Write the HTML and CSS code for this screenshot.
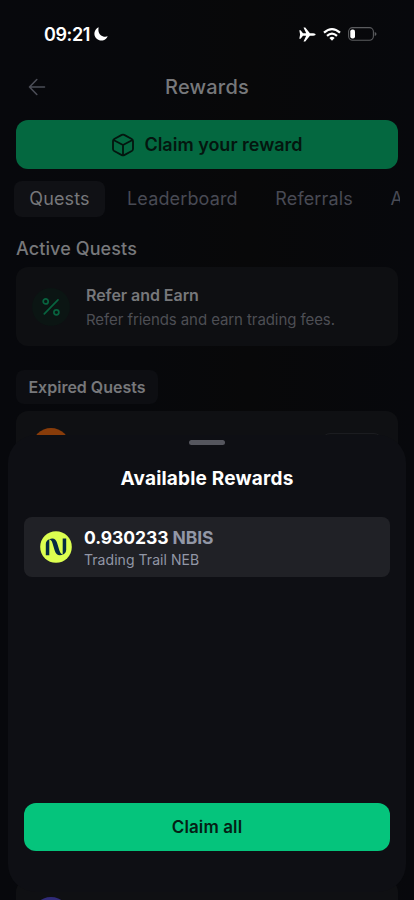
FILE: index.html
```html
<!DOCTYPE html>
<html lang="en">
<head>
<meta charset="utf-8">
<meta name="viewport" content="width=device-width, initial-scale=1">
<title>Rewards</title>
<link rel="stylesheet" href="styles.css">
</head>
<body>
<div class="screen">
  <header class="status">
    <div class="clock"><span>09:21</span>
      <svg width="14" height="14" viewBox="0 0 14 14"><path d="M4.7 0.3A6.9 6.9 0 1 0 13.7 9.3C9 11.2 2.9 7 4.7 0.3Z" fill="#fff"/></svg>
    </div>
    <div class="signals">
      <svg width="17" height="15" viewBox="0 0 17 15"><path d="M.3 3.3H1.6L4 6.2H7.2L4.5.4H6.3L10.9 6.2H14.3Q16.7 6.6 16.7 7.5T14.3 8.8H10.9L6.3 14.6H4.5L7.2 8.8H4L1.6 11.7H.3L1.1 7.5Z" fill="#fff"/></svg>
      <svg width="18" height="13" viewBox="0 0 18 13" fill="none" stroke="#fff" stroke-width="2.2"><path d="M1 4.7Q9-2.3 17 4.7M4 7.9Q9 3.5 14 7.9"/><path d="M6.4 10Q9 7.7 11.6 10L9 12.7Z" fill="#fff" stroke="none"/></svg>
      <svg width="29" height="14" viewBox="0 0 29 14"><rect x=".6" y=".6" width="24.8" height="12.6" rx="4" fill="none" stroke="#5b5c5f" stroke-width="1.1"/><rect x="2.3" y="2.4" width="4.7" height="9" rx="2" fill="#fff"/><path d="M26.7 5Q28.5 5.4 28.5 7T26.7 9Z" fill="#5b5c5f"/></svg>
    </div>
  </header>
  <nav class="topbar">
    <svg class="back" width="18" height="18" viewBox="0 0 18 18" fill="none" stroke="#4b4d57" stroke-width="1.6" stroke-linecap="round" stroke-linejoin="round"><path d="M16.5 9H1.5M8.8 1.5L1.5 9l7.3 7.5"/></svg>
    <h1>Rewards</h1>
  </nav>
  <button class="claim">
    <svg width="24" height="24" viewBox="0 0 24 24" fill="none" stroke="#04160f" stroke-width="1.8" stroke-linecap="round" stroke-linejoin="round"><path d="M10.8 1.9Q12 1.2 13.2 1.9L20.8 6Q22 6.7 22 8V16Q22 17.3 20.8 18L13.2 22.1Q12 22.8 10.8 22.1L3.2 18Q2 17.3 2 16V8Q2 6.7 3.2 6ZM2.5 7L12 12L21.5 7M12 12V22"/></svg>
    <span>Claim your reward</span>
  </button>
  <div class="tabs"><span class="tab selected">Quests</span><span class="tab leader">Leaderboard</span><span class="tab">Referrals</span><span class="tab">A</span></div>
  <h2>Active Quests</h2>
  <section class="quest">
    <div class="percent"><svg width="18" height="18" viewBox="0 0 18 18" fill="none" stroke="#08633f" stroke-width="1.7" stroke-linecap="round"><path d="M2.3 15.9L16 1.8"/><circle cx="3.7" cy="3.4" r="2.5"/><circle cx="14.4" cy="14.3" r="2.5"/></svg></div>
    <div class="quest-text"><div class="quest-name">Refer and Earn</div><div class="quest-info">Refer friends and earn trading fees.</div></div>
  </section>
  <div class="chip">Expired Quests</div>
  <section class="expired"><div class="orange"></div><div class="outline"></div></section>
  <section class="expired last"><div class="purple"></div></section>

  <div class="sheet">
    <div class="handle"></div>
    <h3>Available Rewards</h3>
    <section class="reward">
      <svg width="32" height="32" viewBox="0 0 32 32"><circle cx="16" cy="16" r="15.8" fill="#dcff50"/><g fill="#052b42"><path d="M5.8 24.2V13Q5.8 9.6 9.3 8.2V24.2Z"/><path d="M22.7 7.6H26.2V18.5Q26.2 22.3 22.7 23.7Z"/><path d="M9 8.6C13.4 6.2 16 8.4 17.2 12.2L19.4 19.5C20.2 22 21 23 23 23.5C18.4 25.5 15.9 23.2 14.7 19.5L12.5 12.2C11.8 9.8 10.8 8.8 9 8.6Z"/></g></svg>
      <div><div class="amount">0.930233 <span>NBIS</span></div><div class="source">Trading Trail NEB</div></div>
    </section>
    <button class="claim-all"><span>Claim all</span></button>
  </div>
</div>
</body>
</html>
```
FILE: styles.css
```css
* { box-sizing: border-box; }
body { margin: 0; background: #07080c; }
h1, h2, h3 { margin: 0; font-weight: 500; }
svg { display: block; flex: none; }
button { border: 0; padding: 0; font: inherit; display: flex; align-items: center; justify-content: center; }
.screen {
  position: relative; width: 414px; height: 900px; overflow: hidden;
  display: flex; flex-direction: column; padding: 0 16px;
  background: linear-gradient(90deg, #07080c 0, #07080b 35%, #080809 60%, #07080c 100%);
  font-family: Inter, "Liberation Sans", sans-serif; color: #77787b;
}
.status { height: 68px; flex: none; display: flex; justify-content: space-between; padding: 0 21px 0 28px; align-items: center; }
.clock { display: flex; align-items: center; gap: 4px; color: #fff; font-size: 18px; font-weight: 600; letter-spacing: -.4px; }
.signals { display: flex; align-items: center; gap: 7px; }
.topbar { height: 52px; flex: none; display: grid; grid-template-columns: 18px 1fr 18px; padding: 0 12px 15px; align-items: center; }
h1 { text-align: center; font-size: 20px; letter-spacing: .2px; line-height: 24px; }
.claim { height: 49px; flex: none; border-radius: 12px; background: #046840; color: #04160f; gap: 9px; font-size: 18px; font-weight: 600; }
.tabs { height: 36px; flex: none; margin: 12px -2px 0 -2px; display: flex; overflow: hidden; white-space: nowrap; font-size: 18px; letter-spacing: .15px; line-height: 36px; color: #484a54; }
.tab { flex: none; margin-left: 37.5px; }
.selected { margin-left: 0; width: 91px; text-align: center; background: #101115; border-radius: 8px; color: #77787b; }
.leader { margin-left: 22px; }
h2 { margin-top: 19px; font-size: 18px; letter-spacing: .1px; line-height: 26px; }
.quest { height: 79px; flex: none; margin-top: 5px; border-radius: 12px; background: #0e0f12; display: flex; align-items: center; gap: 16px; padding: 0 16px; }
.quest-text { padding-top: 2px; }
.percent { width: 38px; height: 38px; border-radius: 50%; background: #0b1513; display: grid; place-items: center; }
.quest-name { font-size: 16px; font-weight: 600; letter-spacing: -.05px; line-height: 25px; }
.quest-info { font-size: 15px; letter-spacing: -.08px; line-height: 24px; color: #4d4e54; }
.chip { width: 142px; height: 34px; flex: none; margin-top: 24px; border-radius: 8px; background: #0d0e12; font-size: 16px; font-weight: 600; line-height: 34px; text-align: center; }
.expired { height: 80px; flex: none; margin-top: 7px; border-radius: 12px; background: #0f1013; padding: 17px 16px; display: flex; justify-content: space-between; }
.orange { width: 38px; height: 38px; border-radius: 50%; background: #883c0a; }
.outline { width: 60px; height: 34px; margin-top: 5px; border: 1px solid #1b1c20; border-radius: 8px; }
.last { margin-top: 389px; height: 100px; }
.purple { width: 38px; height: 38px; border-radius: 50%; background: #302b78; }
.sheet { position: absolute; left: 8px; right: 8px; top: 435px; height: 457px; border-radius: 28px; background: #0e0f14; padding: 5px 16px 41px; display: flex; flex-direction: column; }
.handle { width: 36px; height: 5px; border-radius: 3px; background: #55565e; align-self: center; }
h3 { margin-top: 21px; text-align: center; color: #fff; font-size: 19px; letter-spacing: .2px; line-height: 26px; font-weight: 700; }
.reward { height: 60px; margin-top: 25px; border-radius: 8px; background: #202126; display: flex; align-items: center; padding: 2px 16px 0; gap: 12px; }
.reward svg { margin-top: -2px; }
.amount { color: #fff; font-size: 17.5px; letter-spacing: -.08px; line-height: 23px; font-weight: 700; }
.amount span { color: #9297a6; }
.source { color: #9297a6; font-size: 14px; letter-spacing: .05px; line-height: 21px; }
.claim-all { height: 48px; margin-top: auto; border-radius: 12px; background: #05c47c; color: #052015; font-size: 17px; letter-spacing: .12px; font-weight: 600; }
```
